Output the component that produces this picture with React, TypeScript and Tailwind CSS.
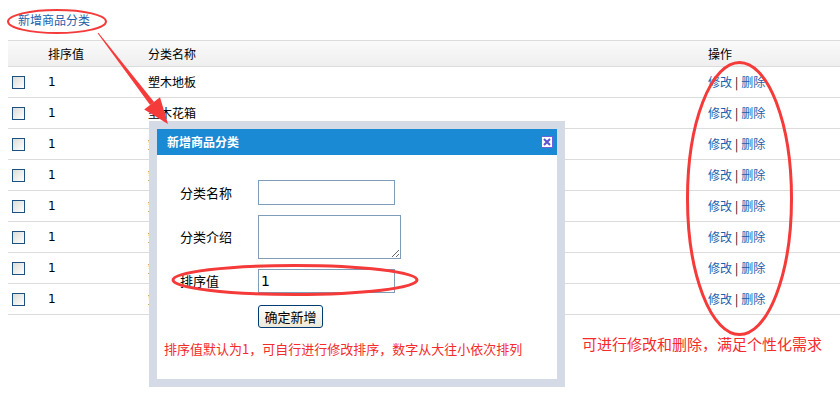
import React from "react";

const ROWS = ["塑木地板", "塑木花箱", "塑木栏杆", "塑木凉亭", "塑木花架", "塑木墙板", "塑木座椅", "塑木廊架"];

const FONT = { fontFamily: '"DejaVu Sans", "Noto Sans CJK SC", sans-serif' };
const CJK = { fontFamily: '"Noto Sans CJK SC", "DejaVu Sans", sans-serif' };

function Checkbox() {
  return (
    <span className="block h-[13px] w-[13px] border border-[#1c5180] bg-gradient-to-br from-[#dcdcd7] to-[#ffffff]" />
  );
}

function Annotations() {
  // red hand-drawn marks over the screenshot
  return (
    <svg className="pointer-events-none absolute left-0 top-0" width="840" height="406" viewBox="0 0 840 406">
      <ellipse cx="57" cy="21.5" rx="49" ry="11.5" fill="none" stroke="#f53a3a" strokeWidth="2" />
      <polygon points="97.6,33.3 98.4,32.7 154.1,101.9 150.1,104.9" fill="#f53a3a" />
      <polygon points="144.2,109.5 160,97.3 168,124" fill="#f53a3a" />
      <ellipse cx="739.5" cy="198.5" rx="52" ry="136" fill="none" stroke="#f53a3a" strokeWidth="3" />
      <ellipse cx="295" cy="280" rx="122" ry="14.5" fill="none" stroke="#f53a3a" strokeWidth="3" />
    </svg>
  );
}

function Dialog() {
  return (
    <div className="absolute left-[149px] top-[121px] h-[266px] w-[416px] border-8 border-[#d4dbe6] bg-white" style={CJK}>
      <div className="flex h-[26px] items-center justify-between bg-[#1a8ad5] pl-[10px] pr-[4px]">
        <span className="text-[12px] font-bold text-white">新增商品分类</span>
        <span className="flex h-[12px] w-[12px] items-center justify-center border border-[#6a66d8] bg-white">
          <svg width="8" height="8" viewBox="0 0 8 8">
            <path d="M1 1 L7 7 M7 1 L1 7" stroke="#5a54cf" strokeWidth="2" />
          </svg>
        </span>
      </div>
      <div className="pl-[23px] pt-[25px] text-[13px] text-black">
        <div className="flex h-[25px] items-center">
          <span className="w-[78px]">分类名称</span>
          <input className="h-[25px] w-[137px] border border-[#7f9db9] px-1 outline-none" />
        </div>
        <div className="mt-[10px] flex items-center">
          <span className="w-[78px]">分类介绍</span>
          <textarea className="h-[44px] w-[143px] border border-[#7f9db9] px-1 outline-none" />
        </div>
        <div className="mt-[10px] flex h-[24px] items-center">
          <span className="w-[78px]">排序值</span>
          <input
            defaultValue="1"
            className="h-[24px] w-[137px] border border-[#7f9db9] px-[2px] text-[14px] outline-none"
            style={FONT}
          />
        </div>
        <div className="mt-[12px] pl-[78px]">
          <button className="h-[23px] w-[65px] rounded-[3px] border border-[#003c74] bg-gradient-to-b from-white to-[#ece9d8] text-[13px] leading-none text-black">
            确定新增
          </button>
        </div>
        <p className="-ml-[16px] mt-[11px] text-[13px] text-[#f52a2a]">排序值默认为1，可自行进行修改排序，数字从大往小依次排列</p>
      </div>
    </div>
  );
}

export default function App() {
  return (
    <div className="relative h-[406px] w-[840px] overflow-hidden bg-white text-[12px] text-black" style={FONT}>
      <div className="flex h-[40px] items-center pl-[18px] pb-[1px]">
        <a className="text-[12px] text-[#1b5fad]" style={CJK}>新增商品分类</a>
      </div>
      <div className="ml-[8px]">
        <div className="flex h-[27px] items-center border-y border-[#dcdcdc] bg-gradient-to-b from-[#fafafa] to-[#efefef]" style={CJK}>
          <span className="w-[40px]" />
          <span className="w-[100px]">排序值</span>
          <span className="w-[560px]">分类名称</span>
          <span>操作</span>
        </div>
        {ROWS.map((name) => (
          <div key={name} className="flex h-[31px] items-center border-b border-[#dcdcdc]">
            <span className="w-[40px] pl-[4px]">
              <Checkbox />
            </span>
            <span className="w-[100px]">1</span>
            <span className="w-[560px]" style={CJK}>{name}</span>
            <span className="flex items-center" style={CJK}>
              <a className="text-[#1b5fad]">修改</a>
              <span className="mx-[3px]">|</span>
              <a className="text-[#1b5fad]">删除</a>
            </span>
          </div>
        ))}
      </div>
      <p className="absolute left-[582px] top-[333px] text-[15px] text-[#f52a2a]" style={CJK}>
        可进行修改和删除，满足个性化需求
      </p>
      <Dialog />
      <Annotations />
    </div>
  );
}
